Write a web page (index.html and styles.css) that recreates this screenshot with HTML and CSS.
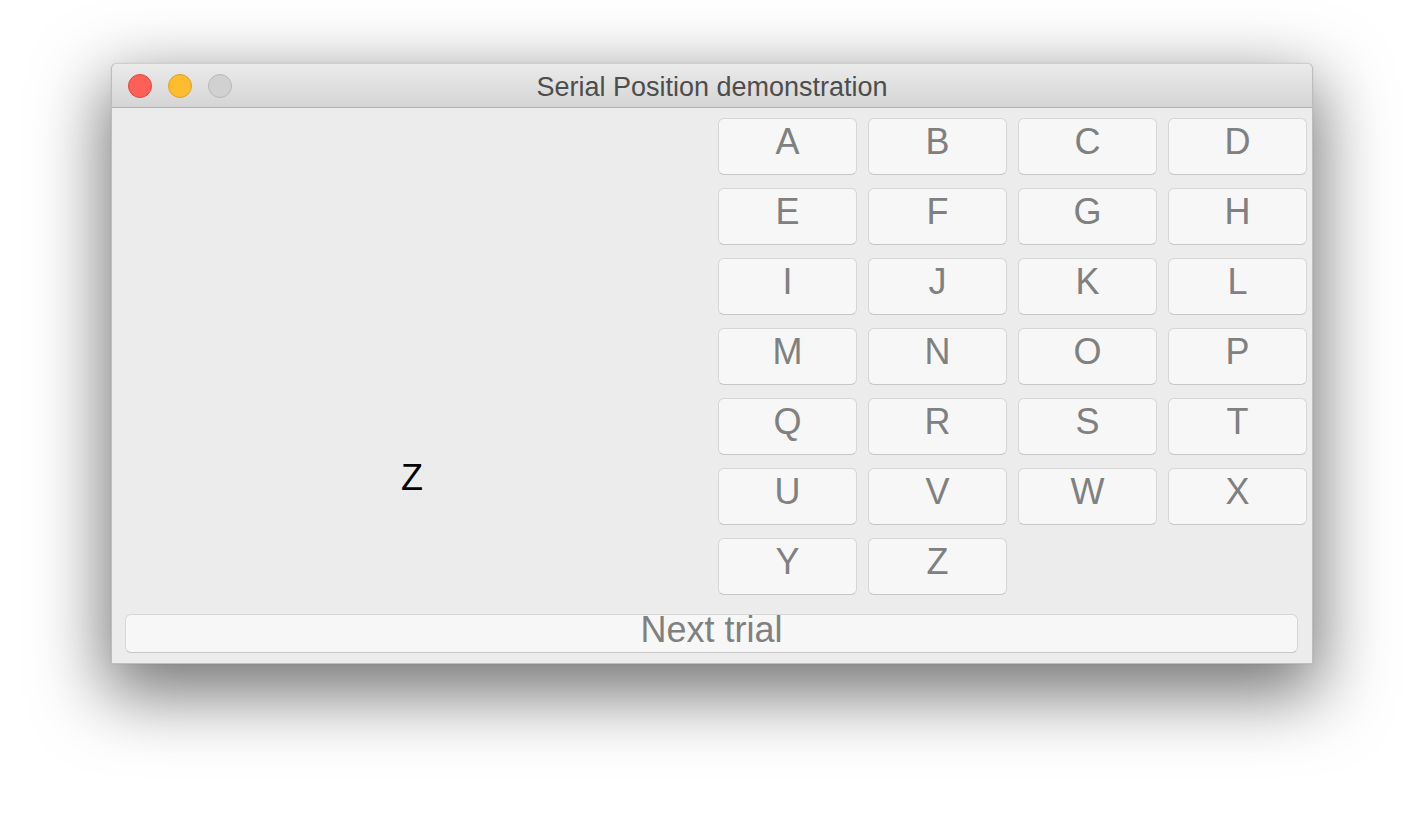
FILE: index.html
```html
<!DOCTYPE html>
<html lang="en">
<head>
<meta charset="utf-8">
<title>Serial Position demonstration</title>
<link rel="stylesheet" href="styles.css">
</head>
<body>
<div class="window">
  <div class="titlebar">
    <div class="lights">
      <span class="light close"></span>
      <span class="light minimize"></span>
      <span class="light zoom"></span>
    </div>
    <div class="title">Serial Position demonstration</div>
    <div class="spacer"></div>
  </div>
  <div class="content">
    <div class="top">
      <div class="stage"><span class="stimulus">Z</span></div>
      <div class="keys">
        <button class="key">A</button><button class="key">B</button><button class="key">C</button><button class="key">D</button>
        <button class="key">E</button><button class="key">F</button><button class="key">G</button><button class="key">H</button>
        <button class="key">I</button><button class="key">J</button><button class="key">K</button><button class="key">L</button>
        <button class="key">M</button><button class="key">N</button><button class="key">O</button><button class="key">P</button>
        <button class="key">Q</button><button class="key">R</button><button class="key">S</button><button class="key">T</button>
        <button class="key">U</button><button class="key">V</button><button class="key">W</button><button class="key">X</button>
        <button class="key">Y</button><button class="key">Z</button>
      </div>
    </div>
    <button class="next">Next trial</button>
  </div>
</div>
</body>
</html>
```

FILE: styles.css
```css
html, body {
  margin: 0;
  padding: 0;
  background: #ffffff;
}

body {
  width: 1424px;
  height: 824px;
  overflow: hidden;
  font-family: "Liberation Sans", Arial, sans-serif;
}

.window {
  margin: 63px 0 0 111px;
  width: 1202px;
  box-sizing: border-box;
  border: 1px solid #bdbdbd;
  border-top-color: #cfcfcf;
  border-radius: 6px 6px 0 0;
  background: #ececec;
  box-shadow: 0 24px 70px 6px rgba(0, 0, 0, 0.55), 0 0 1px rgba(0, 0, 0, 0.25);
}

.titlebar {
  height: 43px;
  display: grid;
  grid-template-columns: 1fr auto 1fr;
  align-items: center;
  background: linear-gradient(#ebebeb, #d5d5d5);
  border-bottom: 1px solid #b1b1b1;
  border-radius: 5px 5px 0 0;
}

.lights {
  display: flex;
  gap: 16px;
  padding-left: 16px;
  padding-top: 1px;
}

.light {
  width: 24px;
  height: 24px;
  box-sizing: border-box;
  border-radius: 50%;
  display: block;
}

.close {
  background: #fe5f57;
  border: 1px solid #e2463f;
}

.minimize {
  background: #febc2e;
  border: 1px solid #dfa023;
}

.zoom {
  background: #d1d1d1;
  border: 1px solid #b8b8b8;
}

.title {
  font-size: 27px;
  line-height: 30px;
  padding-top: 3px;
  color: #4d4d4d;
  white-space: nowrap;
}

.content {
  display: flex;
  flex-direction: column;
  padding: 10px 5px 10px 0;
}

.top {
  display: flex;
}

.stage {
  flex: 1;
  text-align: center;
  padding-top: 342px;
  padding-right: 6px;
}

.stimulus {
  font-size: 36px;
  line-height: 36px;
  color: #000000;
}

.keys {
  display: grid;
  grid-template-columns: repeat(4, 139px);
  grid-auto-rows: 57px;
  column-gap: 11px;
  row-gap: 13px;
}

.key,
.next {
  font-family: "Liberation Sans", Arial, sans-serif;
  font-size: 36px;
  color: #808080;
  background: #f7f7f7;
  border: 1px solid #d6d6d6;
  border-bottom-color: #c6c6c6;
  border-radius: 6px;
  box-sizing: border-box;
  margin: 0;
  cursor: default;
}

.key {
  line-height: 36px;
  padding: 5px 0 0 0;
  display: flex;
  justify-content: center;
  align-items: flex-start;
}

.next {
  margin: 19px 9px 0 13px;
  height: 39px;
  line-height: 28px;
  padding: 0 0 8px 0;
  display: block;
  text-align: center;
}
```
